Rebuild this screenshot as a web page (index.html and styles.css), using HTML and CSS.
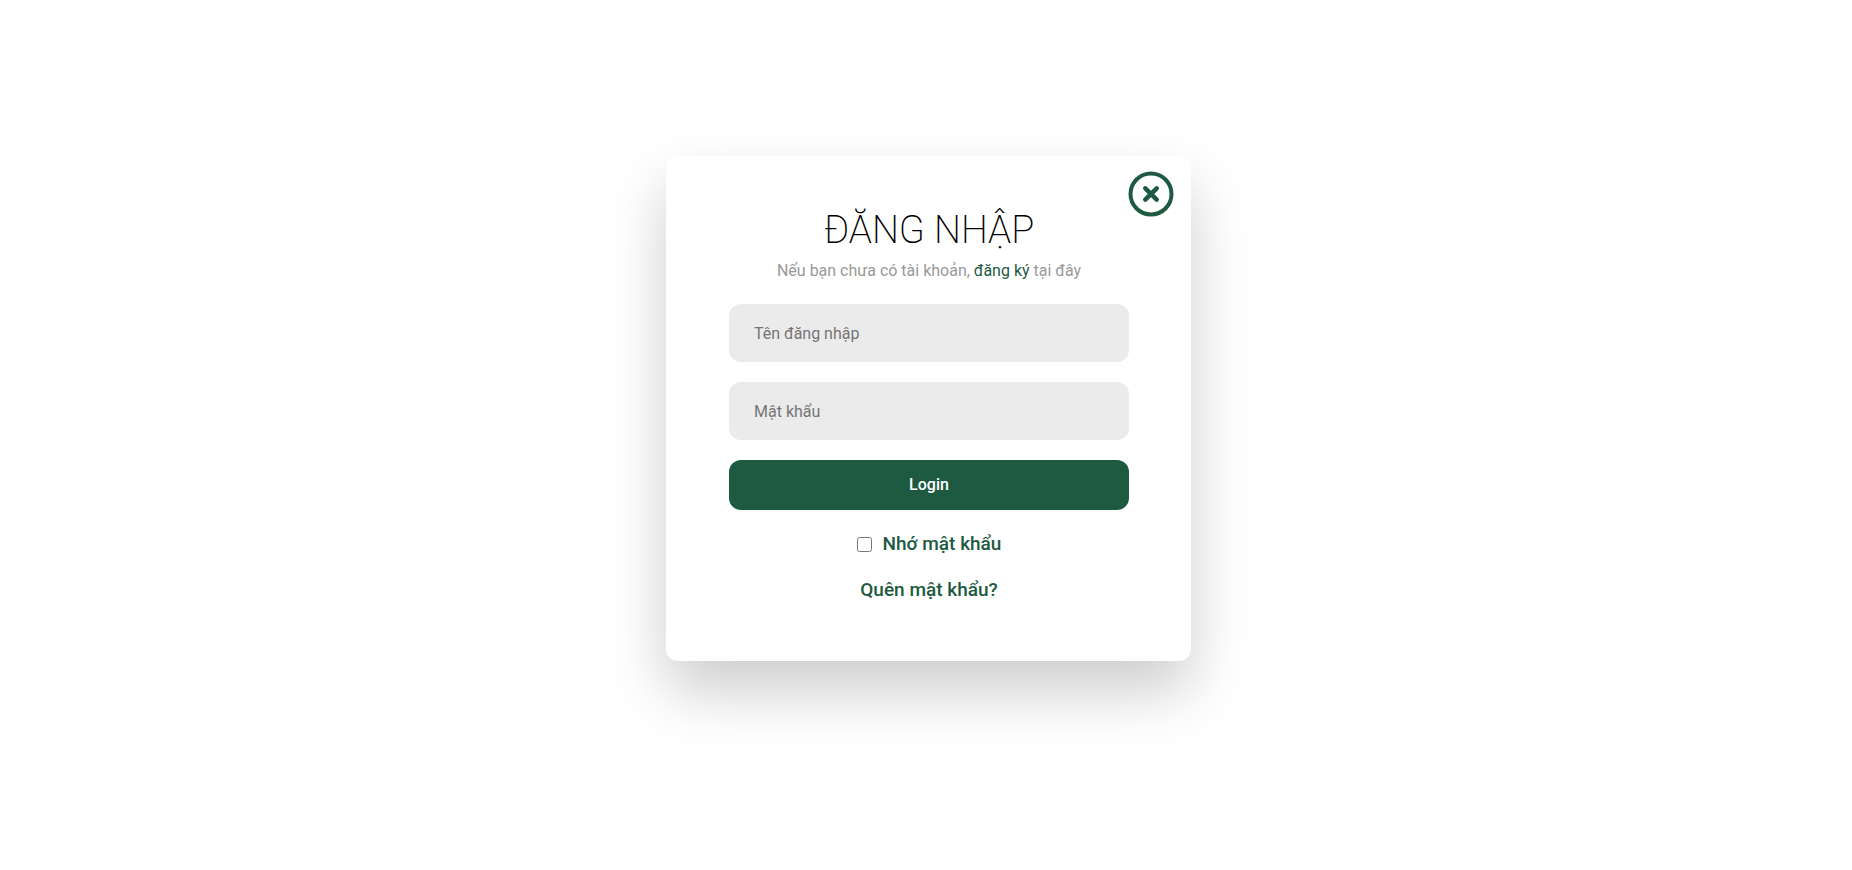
FILE: index.html
```
<!DOCTYPE html>
<html lang="vi">
<head>
  <meta charset="UTF-8">
  <meta name="viewport" content="width=device-width, initial-scale=1.0">
  <title>Đăng nhập</title>
  <link rel="stylesheet" href="styles.css">
</head>
<body>

  <main class="login-card">
    <button class="close-btn" type="button" aria-label="Đóng">
      <svg viewBox="0 0 46 46" fill="none" stroke="currentColor">
        <circle cx="23" cy="23" r="20.5" stroke-width="4"/>
        <path d="M17.3 17.3 L28.7 28.7 M28.7 17.3 L17.3 28.7" stroke-width="4.5" stroke-linecap="round"/>
      </svg>
    </button>

    <h1>ĐĂNG NHẬP</h1>
    <p class="subtitle">Nếu bạn chưa có tài khoản, <a href="#">đăng ký</a> tại đây</p>

    <form class="login-form">
      <input class="field" type="text" placeholder="Tên đăng nhập" aria-label="Tên đăng nhập">
      <input class="field" type="password" placeholder="Mật khẩu" aria-label="Mật khẩu">
      <button class="submit-btn" type="submit">Login</button>

      <div class="remember">
        <input type="checkbox" id="remember">
        <label for="remember">Nhớ mật khẩu</label>
      </div>
      <a class="forgot" href="#">Quên mật khẩu?</a>
    </form>
  </main>

</body>
</html>
```

FILE: styles.css
```
* {
  box-sizing: border-box;
  font-family: Roboto, sans-serif;
}

body {
  min-height: 100vh;
  margin: 0;
  padding: 156px 0 60px 5px;
  background-color: #fff;
}

a {
  color: #1d5a41;
  text-decoration: none;
}

.login-card {
  position: relative;
  max-width: 525px;
  margin: 0 auto;
  padding: 50px 62px 58px 63px;
  border-radius: 12px;
  background-color: #fff;
  box-shadow: 0 30px 60px rgba(0, 0, 0, 0.2);
  text-align: center;
}

.close-btn {
  position: absolute;
  top: 15px;
  right: 17px;
  width: 46px;
  height: 46px;
  padding: 0;
  border: none;
  background: none;
  color: #1d5a41;
  cursor: pointer;
}

.close-btn svg {
  display: block;
}

h1 {
  margin: 0;
  font-size: 38px;
  font-weight: 200;
  line-height: 48px;
  color: #000;
}

.subtitle {
  margin: 6px 0 22px;
  font-size: 16px;
  line-height: 22px;
  color: #999;
}

.login-form {
  display: flex;
  flex-direction: column;
  gap: 20px;
}

.field {
  width: 100%;
  height: 58px;
  padding: 0 25px;
  border: none;
  border-radius: 12px;
  background-color: #ebebeb;
  font-size: 16px;
}

.field::placeholder {
  color: #757575;
}

.submit-btn {
  padding: 15px;
  border: none;
  border-radius: 12px;
  background-color: #1d5a41;
  color: #fff;
  font-size: 16px;
  font-weight: 500;
  line-height: 20px;
  cursor: pointer;
}

.remember {
  display: flex;
  align-items: center;
  justify-content: center;
  gap: 11px;
  margin-top: 1px;
}

.remember input {
  width: 15px;
  height: 15px;
  margin: 0;
}

.remember label,
.forgot {
  color: #1d5a41;
  font-size: 19px;
  font-weight: 500;
  line-height: 26px;
}
```
